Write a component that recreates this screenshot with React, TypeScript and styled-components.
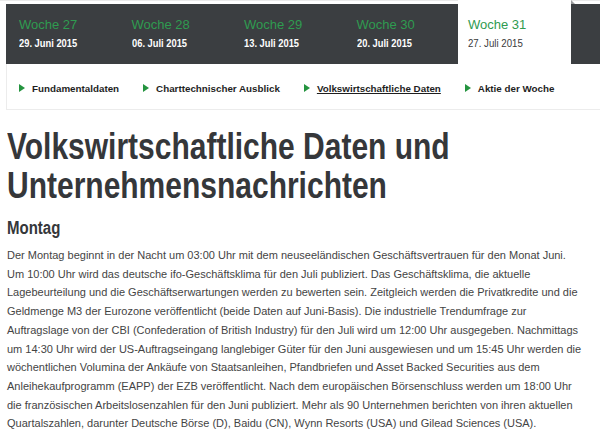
import React from "react";
import styled, {createGlobalStyle} from "styled-components";

const GlobalStyle = createGlobalStyle`
  html, body {
    margin: 0;
    padding: 0;
    background: #ffffff;
  }
  body {
    font-family: "Liberation Sans", Arial, sans-serif;
  }
`;

const weeks = [
  {label: "Woche 27", date: "29. Juni 2015"},
  {label: "Woche 28", date: "06. Juli 2015"},
  {label: "Woche 29", date: "13. Juli 2015"},
  {label: "Woche 30", date: "20. Juli 2015"},
  {label: "Woche 31", date: "27. Juli 2015", active: true},
];

const sections = [
  {label: "Fundamentaldaten"},
  {label: "Charttechnischer Ausblick"},
  {label: "Volkswirtschaftliche Daten", current: true},
  {label: "Aktie der Woche"},
];

// the lines break where the original page breaks them
const bodyLines = [
  "Der Montag beginnt in der Nacht um 03:00 Uhr mit dem neuseeländischen Geschäftsvertrauen für den Monat Juni.",
  "Um 10:00 Uhr wird das deutsche ifo-Geschäftsklima für den Juli publiziert. Das Geschäftsklima, die aktuelle",
  "Lagebeurteilung und die Geschäftserwartungen werden zu bewerten sein. Zeitgleich werden die Privatkredite und die",
  "Geldmenge M3 der Eurozone veröffentlicht (beide Daten auf Juni-Basis). Die industrielle Trendumfrage zur",
  "Auftragslage von der CBI (Confederation of British Industry) für den Juli wird um 12:00 Uhr ausgegeben. Nachmittags",
  "um 14:30 Uhr wird der US-Auftragseingang langlebiger Güter für den Juni ausgewiesen und um 15:45 Uhr werden die",
  "wöchentlichen Volumina der Ankäufe von Staatsanleihen, Pfandbriefen und Asset Backed Securities aus dem",
  "Anleihekaufprogramm (EAPP) der EZB veröffentlicht. Nach dem europäischen Börsenschluss werden um 18:00 Uhr",
  "die französischen Arbeitslosenzahlen für den Juni publiziert. Mehr als 90 Unternehmen berichten von ihren aktuellen",
  "Quartalszahlen, darunter Deutsche Börse (D), Baidu (CN), Wynn Resorts (USA) und Gilead Sciences (USA).",
];

export default function App() {
  return (
    <>
      <GlobalStyle />
      <Page>
        <WeekBar>
          {weeks.map((w) => (
            <WeekTab key={w.label} $active={!!w.active}>
              <WeekLabel>{w.label}</WeekLabel>
              <WeekDate $active={!!w.active}>{w.date}</WeekDate>
            </WeekTab>
          ))}
        </WeekBar>
        <SectionNav>
          {sections.map((s) => (
            <SectionLink key={s.label} href="#" $current={!!s.current}>
              <Arrow />
              <span>{s.label}</span>
            </SectionLink>
          ))}
        </SectionNav>
        <Article>
          <Title>
            Volkswirtschaftliche Daten und
            <br />
            Unternehmensnachrichten
          </Title>
          <DayHeading>Montag</DayHeading>
          <Paragraph>
            {bodyLines.map((line, i) => (
              <React.Fragment key={i}>
                {line}
                {i < bodyLines.length - 1 && <br />}
              </React.Fragment>
            ))}
          </Paragraph>
        </Article>
      </Page>
    </>
  );
}

const Page = styled.div`
  width: 600px;
  height: 438px;
  overflow: hidden;
  padding: 4px 0 0 6px;
  box-sizing: border-box;
  background: linear-gradient(#eaeaea 0, #eaeaea 1px, #ffffff 1px);
`;

const WeekBar = styled.div`
  display: flex;
  align-items: flex-start;
  height: 60px;
  padding-left: 2px;
  background: #3b3e41;
`;

const WeekTab = styled.div<{$active: boolean}>`
  position: relative;
  box-sizing: border-box;
  width: 112.5px;
  height: ${(p) => (p.$active ? "64px" : "60px")};
  margin-top: ${(p) => (p.$active ? "-4px" : "0")};
  padding: ${(p) => (p.$active ? "17px" : "13px")} 0 0 ${(p) => (p.$active ? "10px" : "11px")};
  background: ${(p) => (p.$active ? "#ffffff" : "transparent")};

  ${(p) =>
    p.$active &&
    `
    &::after {
      content: "";
      position: absolute;
      top: 0;
      right: -4px;
      width: 0;
      height: 0;
      border-bottom: 4px solid #9a9c9e;
      border-right: 4px solid transparent;
    }
  `}
`;

const WeekLabel = styled.div`
  font-family: "Liberation Sans", Arial, sans-serif;
  font-size: 13px;
  line-height: 16px;
  color: #2f9b50;
`;

// narrow face stand-in: the sans is squeezed a little
const WeekDate = styled.div<{$active: boolean}>`
  margin-top: 3px;
  font-family: "Liberation Sans", Arial, sans-serif;
  font-size: 10.5px;
  line-height: 14px;
  font-weight: ${(p) => (p.$active ? 400 : 700)};
  color: ${(p) => (p.$active ? "#3a3a3a" : "#ffffff")};
  white-space: nowrap;
  transform: scaleX(${(p) => (p.$active ? 0.92 : 0.89)});
  transform-origin: left center;
`;

const SectionNav = styled.nav`
  display: flex;
  align-items: center;
  gap: 24px;
  box-sizing: border-box;
  height: 46px;
  padding: 3px 0 0 12px;
  border-left: 1px solid #ececec;
  border-bottom: 1px solid #ececec;
`;

const SectionLink = styled.a<{$current: boolean}>`
  display: flex;
  align-items: center;
  gap: 7px;
  font-family: "Liberation Sans", Arial, sans-serif;
  font-size: 9.8px;
  font-weight: 700;
  color: #1e1e1e;
  text-decoration: none;

  span {
    text-decoration: ${(p) => (p.$current ? "underline" : "none")};
  }
`;

const Arrow = styled.i`
  display: block;
  width: 0;
  height: 0;
  border-top: 4px solid transparent;
  border-bottom: 4px solid transparent;
  border-left: 6px solid #24943f;
`;

const Article = styled.div`
  padding: 0 0 0 1px;
`;

// no condensed face is installed, so the bold sans is narrowed to match
const Title = styled.h1`
  margin: 17px 0 0;
  font-family: "Liberation Sans", Arial, sans-serif;
  font-size: 36px;
  line-height: 39px;
  font-weight: 700;
  color: #35373a;
  white-space: nowrap;
  transform: scaleX(0.833);
  transform-origin: left top;
`;

const DayHeading = styled.h2`
  margin: 12px 0 0;
  font-family: "Liberation Sans", Arial, sans-serif;
  font-size: 18px;
  line-height: 22px;
  font-weight: 700;
  color: #35373a;
  transform: scaleX(0.833);
  transform-origin: left top;
`;

const Paragraph = styled.p`
  margin: 7px 0 0;
  font-family: "Liberation Sans", Arial, sans-serif;
  font-size: 11px;
  line-height: 18.7px;
  color: #444444;
  white-space: nowrap;
`;
